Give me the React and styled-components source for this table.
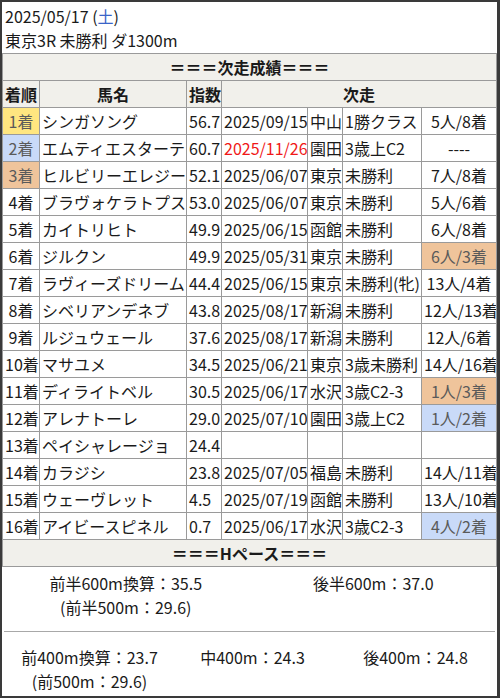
import React from "react";
import styled, { createGlobalStyle } from "styled-components";

const Global = createGlobalStyle`
  html, body { margin: 0; padding: 0; background: #fff; }
  body { font-family: "Noto Sans CJK JP", "Noto Sans", sans-serif; color: #1a1a1a; }
`;

const Frame = styled.div`
  box-sizing: border-box;
  width: 500px;
  height: 698px;
  border: 2px solid #3a3a3a;
  border-right-width: 3px;
  background: #fff;
  font-size: 16px;
  overflow: hidden;
`;

const Title = styled.div`
  padding: 2px 3px 1px;
  line-height: 24px;
`;

const Sat = styled.span`
  color: #3a64c8;
`;

const Table = styled.table`
  width: 100%;
  border-collapse: collapse;
  table-layout: fixed;
`;

const Cell = styled.td`
  border: 1px solid #9a9a9a;
  padding: 1px 2px;
  line-height: 24px;
  height: 24px;
  white-space: nowrap;
  overflow: hidden;
  text-align: ${(p) => p.$align || "left"};
  background: ${(p) => p.$bg || "transparent"};
  color: ${(p) => (p.$red ? "#f01818" : p.$bg ? "#5a5a5a" : "inherit")};
`;

const HeadCell = styled.th`
  border: 1px solid #9a9a9a;
  padding: 1px 2px;
  line-height: 24px;
  height: 24px;
  background: #f1f0eb;
  font-weight: bold;
  white-space: nowrap;
  text-align: ${(p) => p.$align || "center"};
`;

const PaceBlock = styled.div`
  display: grid;
  grid-template-columns: repeat(${(p) => p.$cols}, 1fr);
  padding: ${(p) => p.$pad};
  line-height: 24px;
  text-align: center;
`;

const PaceItem = styled.div`
  white-space: nowrap;
`;

const Divider = styled.div`
  height: 1px;
  background: #a8a8a8;
  margin: 0 2px;
`;

const C = {
  y: "#ffe680",
  b: "#c9daf8",
  t: "#efc49b",
};

const rows = [
  ["1着", "シンガソング", "56.7", "2025/09/15", "中山", "1勝クラス", "5人/8着", C.y, null],
  ["2着", "エムティエスターテ", "60.7", "2025/11/26", "園田", "3歳上C2", "----", C.b, null, true],
  ["3着", "ヒルビリーエレジー", "52.1", "2025/06/07", "東京", "未勝利", "7人/8着", C.t, null],
  ["4着", "ブラヴォケラトプス", "53.0", "2025/06/07", "東京", "未勝利", "5人/6着"],
  ["5着", "カイトリヒト", "49.9", "2025/06/15", "函館", "未勝利", "6人/8着"],
  ["6着", "ジルクン", "49.9", "2025/05/31", "東京", "未勝利", "6人/3着", null, C.t],
  ["7着", "ラヴィーズドリーム", "44.4", "2025/06/15", "東京", "未勝利(牝)", "13人/4着"],
  ["8着", "シベリアンデネブ", "43.8", "2025/08/17", "新潟", "未勝利", "12人/13着"],
  ["9着", "ルジュウェール", "37.6", "2025/08/17", "新潟", "未勝利", "12人/6着"],
  ["10着", "マサユメ", "34.5", "2025/06/21", "東京", "3歳未勝利", "14人/16着"],
  ["11着", "ディライトベル", "30.5", "2025/06/17", "水沢", "3歳C2-3", "1人/3着", null, C.t],
  ["12着", "アレナトーレ", "29.0", "2025/07/10", "園田", "3歳上C2", "1人/2着", null, C.b],
  ["13着", "ペイシャレージョ", "24.4", "", "", "", ""],
  ["14着", "カラジシ", "23.8", "2025/07/05", "福島", "未勝利", "14人/11着"],
  ["15着", "ウェーヴレット", "4.5", "2025/07/19", "函館", "未勝利", "13人/10着"],
  ["16着", "アイビースピネル", "0.7", "2025/06/17", "水沢", "3歳C2-3", "4人/2着", null, C.b],
];

export default function App() {
  return (
    <>
      <Global />
      <Frame>
        <Title>
          <div>
            2025/05/17 (<Sat>土</Sat>)
          </div>
          <div>東京3R 未勝利 ダ1300m</div>
        </Title>
        <Table>
          <colgroup>
            <col style={{ width: 37 }} />
            <col style={{ width: 147 }} />
            <col style={{ width: 35 }} />
            <col style={{ width: 86 }} />
            <col style={{ width: 35 }} />
            <col style={{ width: 79 }} />
            <col />
          </colgroup>
          <tbody>
            <tr>
              <HeadCell colSpan={7}>＝＝＝次走成績＝＝＝</HeadCell>
            </tr>
            <tr>
              <HeadCell $align="left">着順</HeadCell>
              <HeadCell>馬名</HeadCell>
              <HeadCell $align="left">指数</HeadCell>
              <HeadCell colSpan={4}>次走</HeadCell>
            </tr>
            {rows.map((r) => (
              <tr key={r[0]}>
                <Cell $align="center" $bg={r[7]}>{r[0]}</Cell>
                <Cell>{r[1]}</Cell>
                <Cell>{r[2]}</Cell>
                <Cell $red={r[9]}>{r[3]}</Cell>
                <Cell>{r[4]}</Cell>
                <Cell>{r[5]}</Cell>
                <Cell $align="center" $bg={r[8]}>{r[6]}</Cell>
              </tr>
            ))}
            <tr>
              <HeadCell colSpan={7}>＝＝＝Hペース＝＝＝</HeadCell>
            </tr>
          </tbody>
        </Table>
        <PaceBlock $cols={2} $pad="4px 0 12px">
          <PaceItem>
            前半600m換算：35.5
            <br />
            (前半500m：29.6)
          </PaceItem>
          <PaceItem>後半600m：37.0</PaceItem>
        </PaceBlock>
        <Divider />
        <PaceBlock $cols={3} $pad="13px 0 4px 6px">
          <PaceItem>
            前400m換算：23.7
            <br />
            (前500m：29.6)
          </PaceItem>
          <PaceItem>中400m：24.3</PaceItem>
          <PaceItem>後400m：24.8</PaceItem>
        </PaceBlock>
      </Frame>
    </>
  );
}
